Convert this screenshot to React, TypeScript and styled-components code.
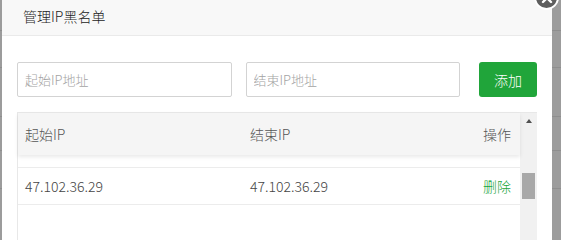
import React from "react";
import styled, { createGlobalStyle } from "styled-components";

const GlobalStyle = createGlobalStyle`
  html, body { margin: 0; padding: 0; overflow: hidden; }
  body {
    background: #9c9c9c;
    font-family: "Noto Sans CJK SC", "Microsoft YaHei", sans-serif;
  }
  * { box-sizing: border-box; }
`;

const Backdrop = styled.div`
  width: 100vw;
  height: 100vh;
  min-height: 211px;
  padding-left: 2px;
  display: flex;
  background-color: #9c9c9c;
  background-image:
    linear-gradient(#8e8e8e, #8e8e8e),
    linear-gradient(#8e8e8e, #8e8e8e),
    linear-gradient(#8e8e8e, #8e8e8e),
    linear-gradient(#8e8e8e, #8e8e8e),
    linear-gradient(#8e8e8e, #8e8e8e);
  background-repeat: no-repeat;
  background-size: 100% 1px;
  background-position: 0 30px, 0 67px, 0 116px, 0 150px, 0 188px;
  overflow: hidden;
`;

const Dialog = styled.div`
  position: relative;
  width: 550px;
  height: 100%;
  background: #fff;
  display: flex;
  flex-direction: column;
`;

const CloseButton = styled.div`
  position: absolute;
  top: -15px;
  right: -7px;
  width: 25px;
  height: 25px;
  border-radius: 50%;
  border: 2px solid #fff;
  background: #5e5e5e;
  display: flex;
  align-items: center;
  justify-content: center;
`;

const TitleBar = styled.div`
  height: 36px;
  line-height: 33px;
  padding-left: 21px;
  background: #f8f8f8;
  border-bottom: 1px solid #eaeaea;
  font-size: 14px;
  font-weight: 300;
  color: #222;
`;

const Body = styled.div`
  flex: 1;
  padding: 26px 15px 0;
  display: flex;
  flex-direction: column;
`;

const FormRow = styled.div`
  display: flex;
  align-items: center;
  gap: 14px;
`;

const IpInput = styled.input`
  width: 215px;
  height: 35px;
  border: 1px solid #d3d3d3;
  border-radius: 2px;
  padding: 0 7px;
  font-family: inherit;
  font-size: 13px;
  font-weight: 300;
  color: #555;
  outline: none;
  &::placeholder { color: #a3a3a3; }
`;

const AddButton = styled.button`
  margin-left: 5px;
  width: 58px;
  height: 35px;
  border: none;
  border-radius: 3px;
  background: #20a53a;
  color: #fff;
  font-family: inherit;
  font-size: 14px;
  font-weight: 300;
  padding: 0;
`;

const TableBox = styled.div`
  margin-top: 15px;
  flex: 1;
  display: flex;
  border-top: 1px solid #e8e8e8;
  border-left: 1px solid #e8e8e8;
`;

const TableMain = styled.div`
  flex: 1;
  display: flex;
  flex-direction: column;
`;

const Columns = styled.div`
  display: grid;
  grid-template-columns: 225px 1fr auto;
  align-items: center;
  padding: 0 9px 0 7px;
  font-weight: 300;
  font-size: 14px;
`;

const HeadRow = styled(Columns)`
  height: 42px;
  background: #f5f5f5;
  box-shadow: 0 2px 4px rgba(0, 0, 0, 0.09);
  color: #555;
  position: relative;
  z-index: 1;
`;

const DataRow = styled(Columns)`
  margin-top: 12px;
  height: 38px;
  border-top: 1px solid #ececec;
  border-bottom: 1px solid #ececec;
  color: #444;
`;

const DeleteLink = styled.span`
  color: #20a53a;
`;

const Scrollbar = styled.div`
  width: 17px;
  background: #f1f1f1;
  display: flex;
  flex-direction: column;
  align-items: center;
`;

const ArrowUp = styled.div`
  margin-top: 6px;
  width: 0;
  height: 0;
  border-left: 3.5px solid transparent;
  border-right: 3.5px solid transparent;
  border-bottom: 4px solid #505050;
`;

const Thumb = styled.div`
  margin-top: 50px;
  width: 13px;
  height: 26px;
  background: #a8a8a8;
`;

export default function App() {
  return (
    <>
      <GlobalStyle />
      <Backdrop>
        <Dialog>
          <CloseButton>
            <svg width="12" height="12" viewBox="0 0 12 12">
              <path d="M2 2L10 10M10 2L2 10" stroke="#fff" strokeWidth="2.4" strokeLinecap="round" />
            </svg>
          </CloseButton>
          <TitleBar>管理IP黑名单</TitleBar>
          <Body>
            <FormRow>
              <IpInput placeholder="起始IP地址" />
              <IpInput placeholder="结束IP地址" />
              <AddButton>添加</AddButton>
            </FormRow>
            <TableBox>
              <TableMain>
                <HeadRow>
                  <span>起始IP</span>
                  <span>结束IP</span>
                  <span>操作</span>
                </HeadRow>
                <DataRow>
                  <span>47.102.36.29</span>
                  <span>47.102.36.29</span>
                  <DeleteLink>删除</DeleteLink>
                </DataRow>
              </TableMain>
              <Scrollbar>
                <ArrowUp />
                <Thumb />
              </Scrollbar>
            </TableBox>
          </Body>
        </Dialog>
      </Backdrop>
    </>
  );
}
